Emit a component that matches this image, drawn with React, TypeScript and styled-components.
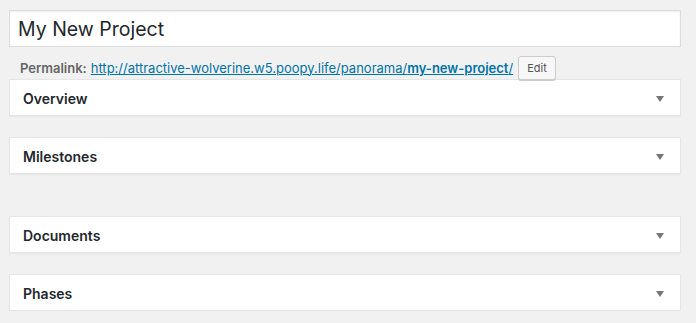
import styled, { createGlobalStyle } from 'styled-components';

const GlobalStyle = createGlobalStyle`
  html, body {
    margin: 0;
    padding: 0;
    background: #f1f1f1;
  }
  body {
    font-family: Inter, Roboto, "Liberation Sans", Arial, sans-serif;
    font-size: 13px;
    color: #23282d;
  }
`;

const Wrap = styled.div`
  padding: 10px 15px 0 9px;
`;

const TitleInput = styled.input`
  display: block;
  box-sizing: border-box;
  width: 672px;
  height: 37px;
  margin: 0;
  padding: 3px 8px;
  font-family: Inter, Roboto, "Liberation Sans", Arial, sans-serif;
  font-size: 19.5px;
  color: #23282d;
  background: #fff;
  border: 1px solid #ddd;
  box-shadow: inset 0 1px 2px rgba(0, 0, 0, 0.07);
  outline: none;
`;

const PermalinkRow = styled.div`
  display: flex;
  align-items: center;
  height: 23px;
  margin-top: 9px;
  padding-left: 11px;
  font-size: 13px;
  color: #666;
`;

const Label = styled.strong`
  font-weight: 600;
  margin-right: 4px;
`;

const Link = styled.a`
  color: #0073aa;
  text-decoration: underline;
`;

const Slug = styled.span`
  font-weight: 600;
`;

const EditButton = styled.button`
  margin-left: 5px;
  height: 24px;
  padding: 0 8px;
  font-family: Inter, Roboto, "Liberation Sans", Arial, sans-serif;
  font-size: 11px;
  color: #555;
  background: #f7f7f7;
  border: 1px solid #ccc;
  border-radius: 3px;
  box-shadow: 0 1px 0 #ccc;
`;

const Box = styled.div<{ $gap: number }>`
  display: flex;
  align-items: center;
  justify-content: space-between;
  box-sizing: border-box;
  width: 672px;
  height: 37px;
  margin-bottom: ${(p) => p.$gap}px;
  padding: 1px 16px 0 13px;
  background: #fff;
  border: 1px solid #e5e5e5;
  box-shadow: 0 1px 1px rgba(0, 0, 0, 0.04);
`;

const BoxTitle = styled.h2`
  margin: 0;
  font-size: 14px;
  font-weight: 600;
  color: #23282d;
`;

const Arrow = styled.span`
  width: 0;
  height: 0;
  border-left: 4px solid transparent;
  border-right: 4px solid transparent;
  border-top: 6px solid #72777c;
  margin-top: 2px;
`;

const boxes = [
  { title: 'Overview', gap: 21 },
  { title: 'Milestones', gap: 42 },
  { title: 'Documents', gap: 21 },
  { title: 'Phases', gap: 0 },
];

export default function App() {
  return (
    <>
      <GlobalStyle />
      <Wrap>
        <TitleInput defaultValue="My New Project" />
        <PermalinkRow>
          <Label>Permalink:</Label>
          <Link href="#">
            http://attractive-wolverine.w5.poopy.life/panorama/<Slug>my-new-project</Slug>/
          </Link>
          <EditButton>Edit</EditButton>
        </PermalinkRow>
        {boxes.map((b) => (
          <Box key={b.title} $gap={b.gap}>
            <BoxTitle>{b.title}</BoxTitle>
            <Arrow />
          </Box>
        ))}
      </Wrap>
    </>
  );
}
